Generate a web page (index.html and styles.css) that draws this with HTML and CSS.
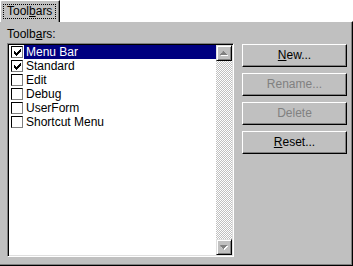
FILE: index.html
```html
<!DOCTYPE html>
<html lang="en">
<head>
    <meta charset="UTF-8">
    <title>Toolbars</title>
    <link rel="stylesheet" href="styles.css">
</head>
<body>

    <!-- TAB STRIP -->
    <div class="tabs">
        <div class="tab"><span class="focus">Tool<u>b</u>ars</span></div>
    </div>

    <!-- PAGE -->
    <div class="panel">
        <div class="left">
            <div class="label">Toolb<u>a</u>rs:</div>
            <div class="listbox">
                <div class="items">
                    <div class="item selected"><span class="check on"><svg width="7" height="7" viewBox="0 0 7 7"><path d="M0 2h1v3h-1z M1 3h1v3h-1z M2 4h1v3h-1z M3 3h1v3h-1z M4 2h1v3h-1z M5 1h1v3h-1z M6 0h1v3h-1z"/></svg></span><span class="name">Menu Bar</span></div>
                    <div class="item"><span class="check on"><svg width="7" height="7" viewBox="0 0 7 7"><path d="M0 2h1v3h-1z M1 3h1v3h-1z M2 4h1v3h-1z M3 3h1v3h-1z M4 2h1v3h-1z M5 1h1v3h-1z M6 0h1v3h-1z"/></svg></span><span class="name">Standard</span></div>
                    <div class="item"><span class="check"></span><span class="name">Edit</span></div>
                    <div class="item"><span class="check"></span><span class="name">Debug</span></div>
                    <div class="item"><span class="check"></span><span class="name">UserForm</span></div>
                    <div class="item"><span class="check"></span><span class="name">Shortcut Menu</span></div>
                </div>
                <div class="scrollbar">
                    <div class="arrow"><svg width="8" height="5" viewBox="0 0 8 5"><path fill="#fff" d="M4 1h1v1h1v1h1v1h1v1h-7v-1h1v-1h1v-1h1z"/><path fill="#808080" d="M3 0h1v1h1v1h1v1h1v1h-7v-1h1v-1h1z"/></svg></div>
                    <div class="track"></div>
                    <div class="arrow"><svg width="8" height="5" viewBox="0 0 8 5"><path fill="#fff" d="M1 1h7v1h-1v1h-1v1h-1v1h-1v-1h-1v-1h-1z"/><path fill="#808080" d="M0 0h7v1h-1v1h-1v1h-1v1h-1v-1h-1v-1h-1z"/></svg></div>
                </div>
            </div>
        </div>

        <div class="buttons">
            <div class="btn"><u>N</u>ew...</div>
            <div class="btn disabled">Rename...</div>
            <div class="btn disabled">Delete</div>
            <div class="btn"><u>R</u>eset...</div>
        </div>
    </div>

</body>
</html>
```

FILE: styles.css
```css
* {
    margin: 0;
    padding: 0;
    box-sizing: border-box;
}

body {
    background: #fff;
    font-family: 'Liberation Sans', Arial, sans-serif;
    font-size: 12px;
    color: #000;
    width: 353px;
    height: 266px;
    overflow: hidden;
}

.tabs {
    height: 21px;
    display: flex;
}

.tab {
    position: relative;
    z-index: 1;
    width: 60px;
    height: 22px;
    background: #c0c0c0;
    border-top: 1px solid #fff;
    border-left: 1px solid #fff;
    border-right: 1px solid #000;
    box-shadow: inset -1px 0 #808080;
    border-top-left-radius: 2px;
    padding: 3px 0 0 2px;
}

.focus {
    display: inline-block;
    border: 1px dotted #000;
    padding: 0 3px;
    line-height: 13px;
}

.panel {
    height: 245px;
    background: #c0c0c0;
    border-top: 1px solid #fff;
    border-right: 1px solid #000;
    border-bottom: 1px solid #000;
    box-shadow: inset -1px -1px #808080;
    display: flex;
    padding-left: 7px;
}

.left {
    width: 227px;
}

.label {
    padding-top: 6px;
    line-height: 13px;
    margin-bottom: 2px;
}

.listbox {
    height: 214px;
    background: #fff;
    border: 1px solid;
    border-color: #808080 #fff #fff #808080;
    box-shadow: inset 1px 1px #000, inset -1px -1px #dfdfdf;
    padding: 1px;
    display: flex;
}

.items {
    flex: 1;
}

.item {
    height: 14px;
    display: flex;
    align-items: center;
    padding-left: 2px;
}

.check {
    width: 12px;
    height: 12px;
    border: 1px solid;
    border-color: #000 #808080 #808080 #000;
    background: #fff;
    margin-right: 1px;
    display: flex;
    align-items: center;
    justify-content: center;
}

.name {
    flex: 1;
    height: 14px;
    line-height: 14px;
    padding-left: 2px;
}

.item.selected .name {
    background: #000080;
    color: #fff;
}

.scrollbar {
    width: 16px;
    display: flex;
    flex-direction: column;
}

.arrow {
    height: 16px;
    background: #c0c0c0;
    border: 1px solid;
    border-color: #dfdfdf #000 #000 #dfdfdf;
    box-shadow: inset 1px 1px #fff, inset -1px -1px #808080;
    display: flex;
    align-items: center;
    justify-content: center;
}

.track {
    flex: 1;
    background: repeating-conic-gradient(#fff 0 25%, #c0c0c0 0 50%);
    background-size: 2px 2px;
}

.buttons {
    margin-left: 8px;
    padding-top: 22px;
    display: flex;
    flex-direction: column;
    gap: 6px;
}

.btn {
    width: 105px;
    height: 23px;
    border: 1px solid;
    border-color: #fff #000 #000 #fff;
    box-shadow: inset -1px -1px #808080;
    text-align: center;
    line-height: 20px;
}

.btn.disabled {
    color: #808080;
}
```
